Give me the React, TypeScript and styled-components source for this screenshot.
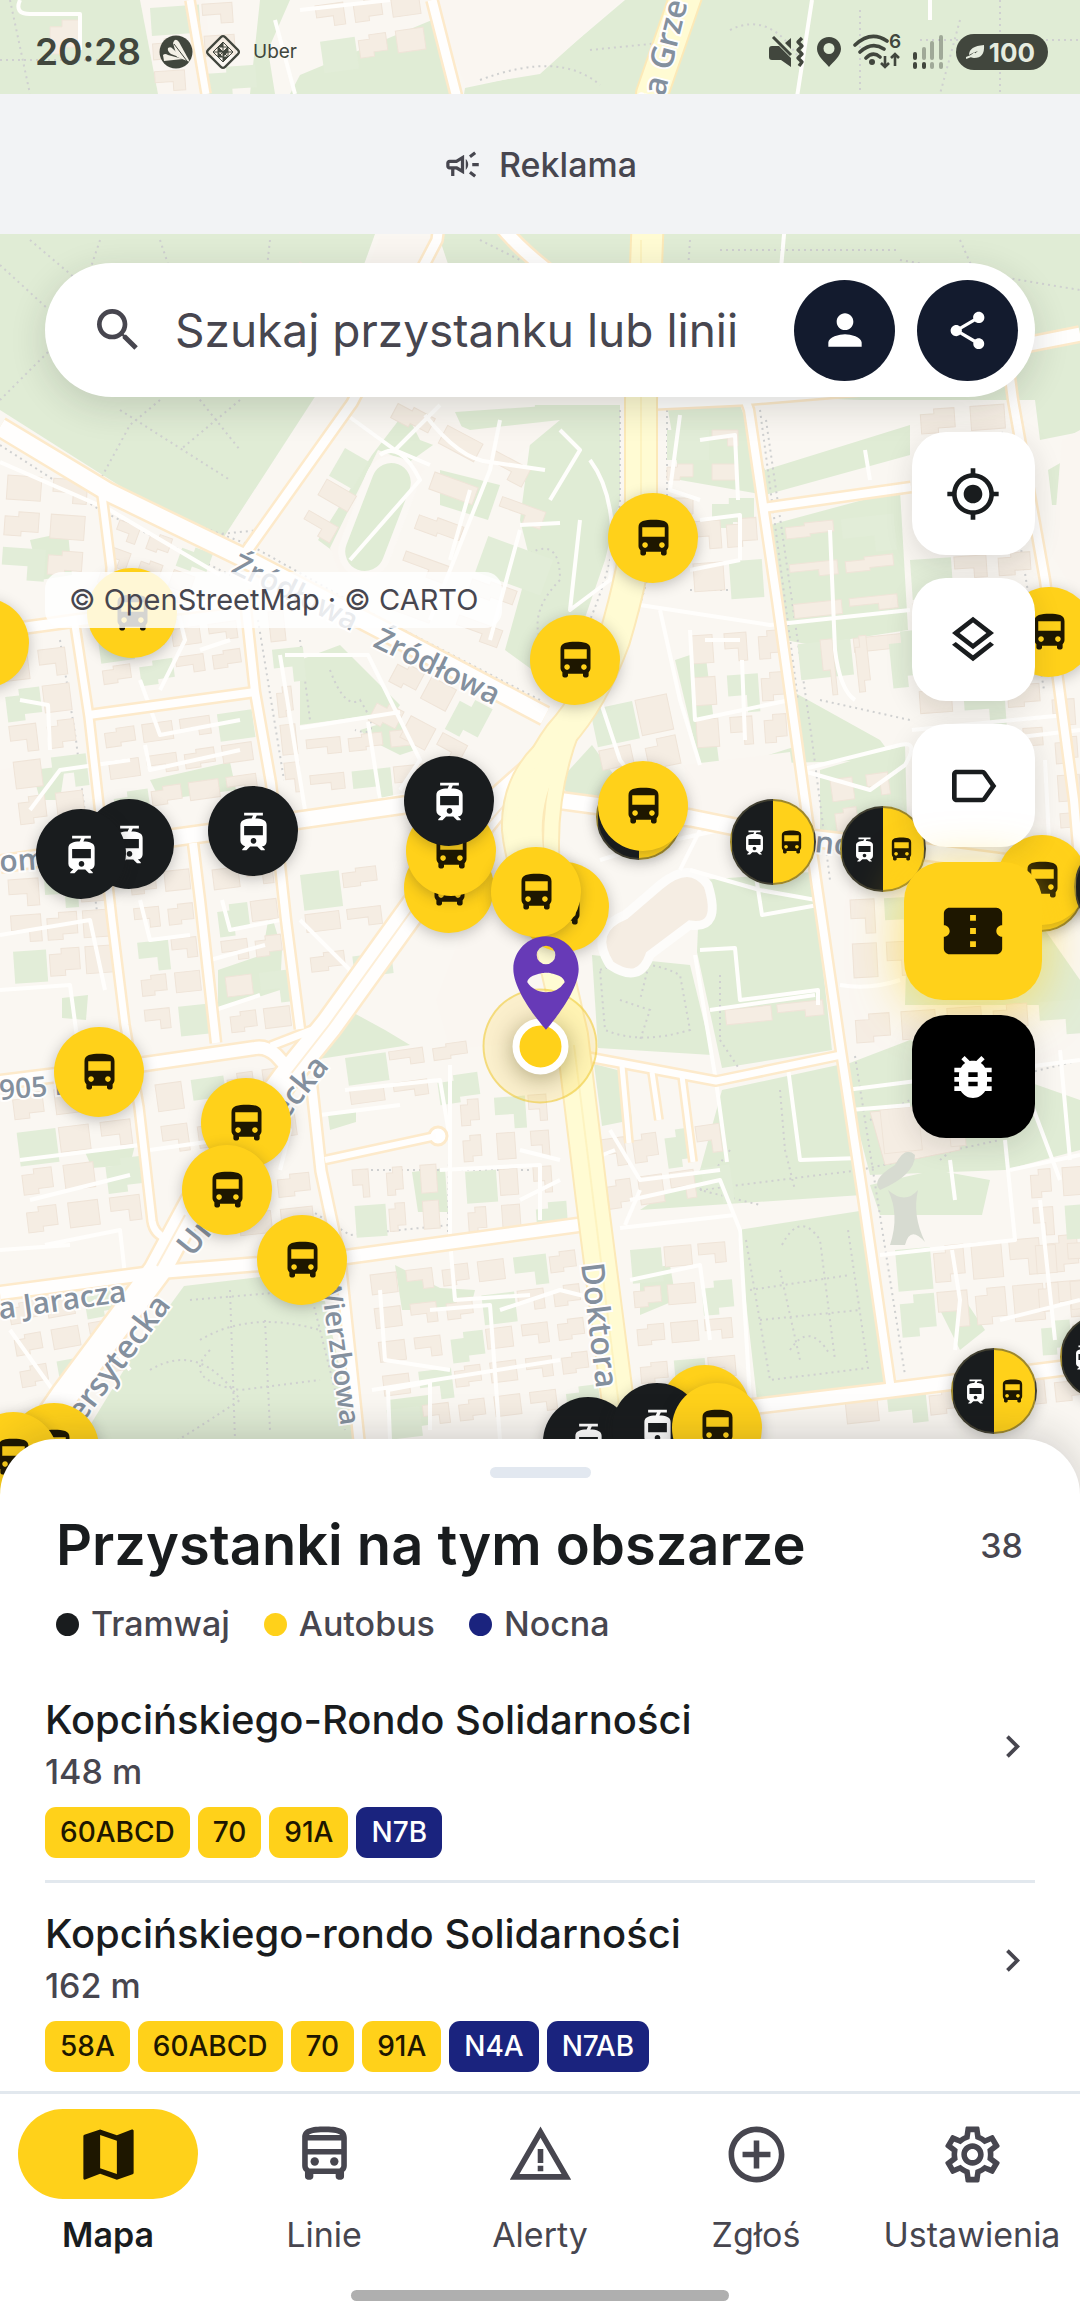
import React from 'react';
import styled, { createGlobalStyle } from 'styled-components';
import {
  MdAddCircleOutline,
  MdBugReport,
  MdChevronRight,
  MdConfirmationNumber,
  MdDirectionsBus,
  MdLabelOutline,
  MdMap,
  MdMyLocation,
  MdOutlineCampaign,
  MdOutlineDirectionsBus,
  MdOutlineLayers,
  MdOutlineSettings,
  MdPerson,
  MdPersonPinCircle,
  MdSearch,
  MdShare,
  MdTram,
  MdWarningAmber,
} from 'react-icons/md';

const color = {
  ink: '#191c1e',
  muted: '#47464f',
  yellow: '#ffd11a',
  onYellow: '#1e1700',
  night: '#1a237e',
  navy: '#131b2e',
  line: '#e2e8ee',
  status: '#41463d',
};

const GlobalStyle = createGlobalStyle`
  *, *::before, *::after { box-sizing: border-box; }
  body {
    margin: 0;
    font-family: Inter, Roboto, "Noto Sans", sans-serif;
    color: ${color.ink};
    background: #ffffff;
  }
  button, input { font: inherit; color: inherit; }
  button { border: 0; padding: 0; background: none; cursor: pointer; }
  svg { display: block; flex: none; }
`;

/* ---------- Page shell ---------- */

const Screen = styled.div`
  position: relative;
  display: flex;
  flex-direction: column;
  min-height: 100vh;
  overflow: hidden;
`;

const MapLayer = styled.div`
  position: absolute;
  inset: 0;
  overflow: hidden;
  background: #faf7f2;
`;

const MapDrawing = styled.svg`
  width: 100%;
  height: 1520px;
`;

const Overlay = styled.div`
  position: relative;
  display: flex;
  flex-direction: column;
  flex: 1;
  pointer-events: none;
  & > * { pointer-events: auto; }
`;

/* ---------- Status bar ---------- */

const StatusBar = styled.header`
  display: flex;
  align-items: center;
  justify-content: space-between;
  height: 94px;
  padding: 10px 32px 0 35px;
  color: ${color.status};
`;

const StatusGroup = styled.div<{ $gap: number }>`
  display: flex;
  align-items: center;
  gap: ${(p) => p.$gap}px;
`;

const Clock = styled.time`
  margin-right: 6px;
  font-size: 37px;
  font-weight: 600;
  line-height: 44px;
`;

const CarrierApp = styled.span`
  font-size: 19px;
  line-height: 24px;
`;

const Battery = styled.div`
  display: flex;
  align-items: center;
  gap: 4px;
  height: 36px;
  padding: 0 13px 0 10px;
  border-radius: 18px;
  background: ${color.status};
  color: #e6ecdf;
  font-size: 26px;
  font-weight: 700;
`;

/* ---------- Advert ---------- */

const AdBanner = styled.aside`
  display: flex;
  align-items: center;
  justify-content: center;
  gap: 17px;
  height: 140px;
  background: #f2f3f5;
  color: ${color.muted};
  font-size: 34px;
  font-weight: 500;
`;

/* ---------- Search ---------- */

const SearchBar = styled.form`
  display: flex;
  align-items: center;
  gap: 22px;
  height: 134px;
  margin: 29px 45px 0;
  padding: 0 17px 0 45px;
  border-radius: 67px;
  background: #ffffff;
  box-shadow: 0 10px 36px rgba(30, 40, 30, 0.16);
`;

const SearchField = styled.label`
  display: flex;
  flex: 1;
  align-items: center;
  gap: 29px;
  min-width: 0;
  color: ${color.muted};
`;

const SearchInput = styled.input`
  flex: 1;
  min-width: 0;
  padding: 0;
  border: 0;
  outline: 0;
  background: none;
  font-size: 46px;
  line-height: 56px;
  &::placeholder { color: ${color.muted}; opacity: 1; }
`;

const RoundButton = styled.button`
  display: grid;
  place-items: center;
  width: 101px;
  height: 101px;
  flex: none;
  border-radius: 50%;
  background: ${color.navy};
  color: #ffffff;
`;

/* ---------- Map controls ---------- */

const ControlsRow = styled.div`
  display: flex;
  align-items: flex-start;
  justify-content: space-between;
  padding: 35px 38px 0 45px;
`;

const Attribution = styled.p`
  margin: 140px 0 0;
  padding: 0 24px;
  border-radius: 17px;
  background: rgba(255, 255, 255, 0.82);
  color: ${color.muted};
  font-size: 29px;
  line-height: 56px;
`;

const ControlStack = styled.div`
  display: flex;
  flex-direction: column;
  align-items: center;
  gap: 23px;
`;

const ActionStack = styled(ControlStack)`
  gap: 15px;
`;

const MapButton = styled.button<{ $tone?: 'light' | 'dark' | 'accent' }>`
  display: grid;
  place-items: center;
  width: ${(p) => (p.$tone === 'accent' ? 138 : 123)}px;
  height: ${(p) => (p.$tone === 'accent' ? 138 : 123)}px;
  border-radius: ${(p) => (p.$tone === 'accent' ? 39 : 34)}px;
  background: ${(p) => (p.$tone === 'accent' ? color.yellow : p.$tone === 'dark' ? '#000000' : '#ffffff')};
  color: ${(p) => (p.$tone === 'accent' ? color.onYellow : p.$tone === 'dark' ? '#ffffff' : color.ink)};
  box-shadow: ${(p) =>
    p.$tone === 'accent' ? '0 8px 50px rgba(255, 209, 26, 0.6)' : '0 8px 28px rgba(30, 30, 30, 0.13)'};
`;

/* ---------- Markers on the map ---------- */

type MarkerKind = 'bus' | 'tram' | 'both';

const MarkerButton = styled.button<{ $x: number; $y: number; $kind: MarkerKind }>`
  position: absolute;
  left: calc(50% + ${(p) => p.$x - 540}px);
  top: ${(p) => p.$y}px;
  display: flex;
  align-items: center;
  justify-content: ${(p) => (p.$kind === 'both' ? 'space-around' : 'center')};
  width: ${(p) => (p.$kind === 'both' ? 86 : 90)}px;
  height: ${(p) => (p.$kind === 'both' ? 86 : 90)}px;
  padding: ${(p) => (p.$kind === 'both' ? '0 4px' : '0')};
  transform: translate(-50%, -50%);
  border: ${(p) => (p.$kind === 'both' ? '2px solid rgba(90, 85, 60, 0.6)' : '0')};
  border-radius: 50%;
  background: ${(p) =>
    p.$kind === 'both'
      ? `linear-gradient(90deg, ${color.ink} 50%, ${color.yellow} 50%)`
      : p.$kind === 'bus'
        ? color.yellow
        : color.ink};
  color: ${(p) => (p.$kind === 'bus' ? color.onYellow : '#ffffff')};
  box-shadow: 0 3px 14px rgba(30, 30, 30, 0.26);
  & > svg + svg { color: ${color.onYellow}; }
`;

const UserHalo = styled.div`
  position: absolute;
  left: 50%;
  top: 1046px;
  display: grid;
  place-items: center;
  width: 115px;
  height: 115px;
  transform: translate(-50%, -50%);
  border: 2px solid rgba(240, 205, 70, 0.6);
  border-radius: 50%;
  background: rgba(255, 209, 26, 0.17);
`;

const UserDot = styled.div`
  width: 56px;
  height: 56px;
  border: 7px solid #ffffff;
  border-radius: 50%;
  background: ${color.yellow};
  box-shadow: 0 4px 24px rgba(60, 50, 0, 0.4);
`;

const UserPin = styled.div`
  position: absolute;
  left: calc(50% + 6px);
  top: 927px;
  transform: translateX(-50%);
  color: #673ab7;
`;

/* ---------- Bottom sheet ---------- */

const Sheet = styled.section`
  position: relative;
  display: flex;
  flex-direction: column;
  padding-top: 28px;
  border-radius: 56px 56px 0 0;
  background: #ffffff;
  box-shadow: 0 -6px 40px rgba(30, 30, 30, 0.18);
`;

const Handle = styled.div`
  align-self: center;
  width: 101px;
  height: 11px;
  border-radius: 6px;
  background: #e2e8f0;
`;

const SheetHeader = styled.div`
  display: flex;
  align-items: center;
  justify-content: space-between;
  margin-top: 35px;
  padding: 0 57px 0 56px;
`;

const SheetTitle = styled.h1`
  margin: 0;
  font-size: 56px;
  font-weight: 600;
  line-height: 64px;
`;

const StopCount = styled.span`
  color: ${color.muted};
  font-size: 34px;
  font-weight: 500;
`;

const Legend = styled.ul`
  display: flex;
  gap: 34px;
  margin: 27px 0 0;
  padding: 0 56px;
  list-style: none;
`;

const LegendItem = styled.li<{ $dot: string }>`
  display: flex;
  align-items: center;
  gap: 12px;
  color: ${color.muted};
  font-size: 34px;
  font-weight: 500;
  line-height: 40px;
  &::before {
    content: '';
    width: 23px;
    height: 23px;
    border-radius: 50%;
    background: ${(p) => p.$dot};
  }
`;

const StopList = styled.ul`
  margin: 25px 0 0;
  padding: 0 45px;
  list-style: none;
`;

const StopItem = styled.li`
  padding: 25px 0 22px;
  border-bottom: 3px solid ${color.line};
  &:last-child {
    padding-bottom: 19px;
    border-bottom: 0;
  }
`;

const StopButton = styled.button`
  display: flex;
  align-items: center;
  justify-content: space-between;
  width: 100%;
  text-align: left;
`;

const StopName = styled.span`
  display: block;
  font-size: 40px;
  font-weight: 500;
  line-height: 52px;
`;

const StopDistance = styled.span`
  display: block;
  color: ${color.muted};
  font-size: 34px;
  font-weight: 500;
  line-height: 52px;
`;

const LineChips = styled.div`
  display: flex;
  gap: 8px;
  margin-top: 9px;
`;

const LineChip = styled.span<{ $night: boolean }>`
  padding: 0 15px;
  border-radius: 11px;
  background: ${(p) => (p.$night ? color.night : color.yellow)};
  color: ${(p) => (p.$night ? '#ffffff' : color.onYellow)};
  font-size: 28px;
  font-weight: 500;
  line-height: 51px;
`;

/* ---------- Navigation ---------- */

const NavBar = styled.nav`
  position: relative;
  display: grid;
  grid-template-columns: repeat(5, 1fr);
  padding-top: 15px;
  border-top: 3px solid ${color.line};
  background: #ffffff;
`;

const NavLink = styled.a<{ $active: boolean }>`
  display: flex;
  flex-direction: column;
  align-items: center;
  gap: 14px;
  color: ${(p) => (p.$active ? color.ink : color.muted)};
  font-size: 34px;
  font-weight: ${(p) => (p.$active ? 600 : 400)};
  line-height: 44px;
  text-decoration: none;
`;

const NavPill = styled.span<{ $active: boolean }>`
  display: grid;
  place-items: center;
  width: 180px;
  height: 90px;
  border-radius: 45px;
  background: ${(p) => (p.$active ? color.yellow : 'transparent')};
  color: ${(p) => (p.$active ? color.onYellow : color.muted)};
`;

const GestureArea = styled.footer`
  position: relative;
  display: flex;
  justify-content: center;
  padding: 33px 0 15px;
  background: #ffffff;
`;

const GestureBar = styled.div`
  width: 35%;
  height: 11px;
  border-radius: 6px;
  background: #afafaf;
`;

/* ---------- Map data ---------- */

const parks = [
  'M0 0H150L165 94L170 240H0Z',
  'M260 0H290L268 50L275 94H250Z',
  'M300 75L432 20L455 94H290Z',
  'M465 88L540 72L625 0H1080V400H860L650 392L460 300L440 240Z',
  'M0 234H375L318 392L222 540L150 505L0 410Z',
  'M425 415L440 440L398 470L345 560L318 540L372 455L405 412Z',
  'M440 470L500 485L488 520L440 505Z',
  'M455 412L560 405L530 440L470 445Z',
  'M535 405H620V500L605 560L560 690L505 650L530 560L520 520Z',
  'M300 660L340 645L400 705L395 712L300 725Z',
  'M360 730L400 718L415 750L400 755L370 740Z',
  'M30 540L68 532L72 575L40 580Z',
  'M150 780L230 762L236 790L160 800Z',
  'M32 770L65 766L60 800L40 800Z',
  'M668 410L740 405L765 470L910 425V455L765 495L680 480Z',
  'M770 525L900 490L908 630L812 645L785 640Z',
  'M675 660L705 650L720 770L800 745L790 690L880 740L895 760L700 765Z',
  'M820 770L905 745L908 860L820 835Z',
  'M560 780L592 745L625 790L615 805L570 800Z',
  'M1035 400H1080V432L1040 440Z',
  'M1048 470L1062 462L1075 490L1064 505H1052Z',
  'M592 955L690 965L712 1055L598 1048Z',
  'M700 880L812 872L832 1050L722 1068L697 952Z',
  'M594 1064L625 1072L632 1120L602 1126Z',
  'M722 1090L838 1065L862 1195L640 1210L700 1170Z',
  'M738 1230L866 1210L888 1384L757 1400Z',
  'M842 1066L910 1040L1080 1100V1150L1005 1170L870 1175Z',
  'M870 1185L935 1170L990 1180L982 1215L880 1215Z',
  'M905 1005H1080V980L1045 930L908 900Z',
  'M640 1270L670 1265L676 1300L640 1315Z',
  'M184 1286L318 1270L358 1450H75L130 1360Z',
  'M218 970L262 955L270 910L282 950L280 990L218 1010Z',
  'M330 1000L385 1030L410 1045L345 1055L300 1062Z',
  'M62 998L88 995L86 1020L62 1018Z',
  'M85 1152L135 1145L130 1165L92 1168Z',
  'M395 1265L402 1310L470 1310L475 1290L440 1288Z',
  'M412 1172L445 1168L448 1212L418 1212Z',
  'M388 1400L428 1395V1425L392 1430Z',
  'M328 1115L356 1110V1122L330 1130Z',
  'M940 1310L965 1300L985 1330L960 1350Z',
];

const pale = [
  'M430 0H622L540 74L466 86Z',
  'M140 0H205L215 94H158Z',
  'M380 236H440L400 330L310 410L255 490L222 540L320 395Z',
  'M400 400L470 430L560 420L500 470L420 440Z',
  'M330 548L378 450L425 468L345 585Z',
  'M1052 555L1062 440L1080 430V600Z',
  'M684 765L790 752L800 820L690 810Z',
  'M0 770L25 765L35 850H0Z',
  'M436 1000L472 905L540 895V1040L450 1050Z',
];

const roads: { d: string; w: number }[] = [
  { d: 'M190 0L206 94', w: 7 },
  { d: 'M432 0L456 94L437 240L352 403L246 552', w: 9 },
  { d: 'M500 225Q530 262 590 300', w: 12 },
  { d: 'M0 427L108 492L240 556L386 632L545 716', w: 17 },
  { d: 'M102 495L111 567L110 600', w: 7 },
  { d: 'M75 625L89 717L112 920L125 1025L139 1107L152 1221Q154 1234 166 1238', w: 7 },
  { d: 'M0 631L80 620L246 600', w: 10 },
  { d: 'M89 715L255 692', w: 8 },
  { d: 'M244 590L255 692L271 783L286 920L300 1029', w: 8 },
  { d: 'M193 843L200 900L216 1043', w: 8 },
  { d: 'M0 864L178 837L300 820L404 805L520 794L556 800L691 818L760 832L910 850L1080 872', w: 15 },
  { d: 'M0 1082L145 1064L255 1048Q266 1046 276 1055L295 1076', w: 12 },
  { d: 'M271 1046L325 1025', w: 7 },
  { d: 'M311 1079L321 1171L340 1260L360 1450', w: 9 },
  { d: 'M0 1293L160 1272L346 1257L600 1222', w: 12 },
  { d: 'M325 1160L436 1136', w: 6 },
  { d: 'M735 370L749 410L777 600L798 750L816 880L841 1051L863 1197L891 1390', w: 8 },
  { d: 'M763 508L911 487', w: 8 },
  { d: 'M655 402L740 398L860 388L1030 344L1080 334', w: 13 },
  { d: 'M1005 340L1013 400L1045 580L1059 687L1074 800L1080 870', w: 8 },
  { d: 'M588 1057L716 1081L841 1055', w: 7 },
  { d: 'M622 1066L629 1143', w: 5 },
  { d: 'M652 1072L659 1120', w: 5 },
  { d: 'M682 1076L693 1162', w: 5 },
  { d: 'M630 1430L749 1407L891 1390L1080 1366', w: 13 },
  { d: 'M545 760L500 800L414 907L329 1025L286 1078L193 1204L157 1271L64 1396L20 1460', w: 26 },
];

const lanes = [
  'M540 765L414 907L329 1025L290 1075',
  'M185 1215L157 1266',
];

const avenues: { d: string; w: number }[] = [
  { d: 'M688 -10L652 94L647 240L641 400V500Q638 560 614 640Q592 700 560 735Q520 790 528 850L548 930L572 1035L592 1200L624 1450', w: 30 },
  { d: 'M560 735Q508 770 510 830Q515 880 542 910', w: 14 },
  { d: 'M585 700Q545 780 552 870', w: 14 },
];

const alleys = [
  'M20 0Q14 14 30 14H80V50',
  'M275 20L295 94M300 10L390 0',
  'M930 0V20M812 0L795 110L780 280L778 263',
  'M0 462L110 510L220 575',
  'M340 410L395 450L430 465M395 450L440 405',
  'M425 415Q460 460 490 462L545 470',
  'M430 620L490 470L500 420',
  'M380 455Q400 440 420 480L350 560',
  'M450 560L470 490M520 525L560 523M490 640L520 530',
  'M285 655L368 655L420 760L400 790M300 728L400 712',
  'M280 655L305 810M368 722L380 800L430 790',
  'M140 680L160 735L240 720M145 745L150 770L240 750',
  'M30 810L60 770L130 760M20 700L48 705L50 750',
  'M175 600L185 640L160 690M200 650L230 640',
  'M560 430L580 450L550 500M590 460Q620 500 610 580L570 610L580 520',
  'M680 415L670 490L700 500M700 440L735 435L738 500',
  'M640 605L770 625L910 610M830 530L835 650Q840 690 855 700',
  'M865 450L870 480M700 520L740 515V560M690 570L740 560',
  'M690 630L695 720L790 700M742 660L745 740M705 640H740',
  'M700 765L680 700L660 610M600 700L620 760L650 800',
  'M800 770L900 745Q920 740 905 765L870 790L800 770',
  'M910 750L1080 730M1045 760L1050 860M912 730L1065 715',
  'M600 860L650 845L720 830M680 870L700 830',
  'M690 870L760 890L816 900M755 870L762 915L818 905',
  'M695 955L716 1081L727 1162M700 950L735 948L740 1000L818 990V1005',
  'M710 1010L815 995M840 985Q870 990 900 980',
  'M788 1068L800 1160L860 1158M785 1070L760 1070',
  'M846 1090L1080 1060M850 1110L910 1105M1005 1140L1015 1240L880 1255',
  'M1010 1170L1080 1155M1060 1050L1070 1160M1030 1100L1060 1180M950 1160L955 1200',
  'M952 1250L960 1300L955 1350M1040 1200L1055 1340M1000 1320L1080 1300',
  'M610 1130L640 1180L720 1170M590 1160L615 1150M630 1200L720 1180L740 1230L750 1400',
  'M620 1228L735 1215M630 1280L700 1265L710 1340M640 1190L625 1225',
  'M520 1150L560 1160M520 1200L560 1180M500 1310L560 1290L600 1300',
  'M0 935L90 920L105 990M140 900L150 940L190 935M0 990L70 985L80 1060',
  'M210 960L265 945M215 1010L260 995M222 900L230 930L280 920',
  'M150 1150L290 1130L280 1170M20 1160L140 1145M30 1200L130 1175',
  'M45 1245L120 1230L125 1275M0 1250L70 1245M10 1330L60 1400M100 1330L130 1370',
  'M362 1250L450 1240L455 1300L530 1295M380 1290L385 1360L450 1370M440 1170L540 1165L540 1220',
  'M372 1390L560 1360M430 1310L490 1305L500 1440M390 1440L388 1390L430 1382V1430',
  'M345 1090L440 1080L450 1140M320 1115L400 1105M450 1065V1240M300 920L350 970L340 1010',
];

const dotted = [
  'M0 265L60 320L100 390M30 240L160 350L240 450M100 240L70 330L0 400M160 400L130 425L100 480M240 400L180 450M20 430L130 500L250 545',
  'M120 410L230 480M160 240L180 300L300 340M270 240L260 330M210 535L260 530',
  'M480 80Q560 50 600 85M590 50L690 40M730 30Q770 10 800 60M860 10V90M920 40H1080M1000 0V94M960 20L940 94M10 0L30 94M0 60H100',
  'M480 240L520 260M690 240L680 390M720 250H900M960 240L1000 330M900 260L1080 290',
  'M620 410V500Q615 560 590 620M667 410V510L630 640M760 410L798 700M520 560Q560 530 560 580Q530 610 540 640',
  'M330 670Q345 710 360 700Q385 740 355 730M300 640L310 720M690 590H760M820 700L910 720',
  'M600 970Q640 955 680 975L690 1030Q640 1045 605 1030ZM620 1000L650 1010L640 1040M720 975L720 1040M650 960L640 1000',
  'M720 1040L740 1070M780 1090L785 1150L795 1190M700 1190L860 1170M730 1150L700 1190L760 1205',
  'M746 1240L770 1380L868 1368L848 1230M780 1270L800 1360M750 1290L850 1275M782 1245Q800 1210 820 1240L835 1360M760 1320L860 1310M790 1350Q810 1320 830 1355',
  'M190 1300L310 1290L345 1430M230 1290L235 1440M200 1340Q250 1310 320 1330M150 1370Q200 1340 240 1400Q180 1440 160 1450M265 1320L270 1430M210 1350Q180 1380 240 1390L320 1380',
  'M860 1170L1000 1140M1000 1080L1080 1060M870 1120L930 1090M940 1160L1000 1110',
  'M310 1210L350 1235L450 1225M450 1080L448 1235M285 900L300 1010M365 1170H540',
  'M0 445L100 510L230 575M540 700L380 618L250 545M60 640L76 740L98 920M258 620L284 780M766 420L812 740L830 880M1000 420L1044 690M855 1056L905 1375M576 1060L590 1180',
];

type Cluster = { x: number; y: number; cols: number; rows: number; dx: number; dy: number; w: number; h: number; r: number };

const clusters: Cluster[] = [
  { x: 150, y: 8, cols: 2, rows: 3, dx: 52, dy: 32, w: 30, h: 20, r: -4 },
  { x: 315, y: 6, cols: 3, rows: 2, dx: 38, dy: 36, w: 28, h: 22, r: -8 },
  { x: 50, y: 20, cols: 1, rows: 1, dx: 40, dy: 30, w: 30, h: 34, r: 0 },
  { x: 8, y: 475, cols: 2, rows: 3, dx: 46, dy: 36, w: 34, h: 24, r: 4 },
  { x: 120, y: 520, cols: 3, rows: 3, dx: 34, dy: 28, w: 22, h: 18, r: 20 },
  { x: 345, y: 448, cols: 1, rows: 3, dx: 30, dy: 36, w: 34, h: 18, r: 30 },
  { x: 435, y: 472, cols: 2, rows: 4, dx: 72, dy: 42, w: 46, h: 18, r: 20 },
  { x: 300, y: 262, cols: 2, rows: 3, dx: 52, dy: 36, w: 28, h: 18, r: 30 },
  { x: 400, y: 400, cols: 3, rows: 1, dx: 54, dy: 30, w: 40, h: 20, r: 28 },
  { x: 0, y: 655, cols: 2, rows: 5, dx: 38, dy: 36, w: 27, h: 27, r: -7 },
  { x: 98, y: 640, cols: 4, rows: 2, dx: 37, dy: 28, w: 28, h: 17, r: -8 },
  { x: 104, y: 730, cols: 4, rows: 3, dx: 38, dy: 32, w: 30, h: 18, r: -8 },
  { x: 268, y: 612, cols: 1, rows: 5, dx: 34, dy: 38, w: 15, h: 30, r: -6 },
  { x: 306, y: 740, cols: 3, rows: 2, dx: 42, dy: 36, w: 34, h: 16, r: -6 },
  { x: 400, y: 660, cols: 3, rows: 2, dx: 36, dy: 44, w: 28, h: 24, r: 28 },
  { x: 667, y: 430, cols: 2, rows: 3, dx: 45, dy: 34, w: 26, h: 16, r: 0 },
  { x: 690, y: 522, cols: 2, rows: 2, dx: 36, dy: 42, w: 30, h: 28, r: -4 },
  { x: 785, y: 525, cols: 2, rows: 4, dx: 56, dy: 40, w: 48, h: 14, r: -6 },
  { x: 690, y: 636, cols: 3, rows: 3, dx: 34, dy: 42, w: 22, h: 28, r: -4 },
  { x: 820, y: 640, cols: 3, rows: 1, dx: 34, dy: 60, w: 12, h: 56, r: -6 },
  { x: 590, y: 710, cols: 2, rows: 2, dx: 46, dy: 42, w: 32, h: 36, r: -12 },
  { x: 830, y: 780, cols: 2, rows: 2, dx: 36, dy: 30, w: 22, h: 22, r: -8 },
  { x: 8, y: 880, cols: 3, rows: 3, dx: 36, dy: 36, w: 30, h: 27, r: -4 },
  { x: 130, y: 875, cols: 2, rows: 5, dx: 34, dy: 34, w: 25, h: 20, r: -6 },
  { x: 212, y: 870, cols: 2, rows: 5, dx: 34, dy: 36, w: 26, h: 20, r: -7 },
  { x: 300, y: 875, cols: 2, rows: 3, dx: 42, dy: 40, w: 34, h: 18, r: -7 },
  { x: 12, y: 1095, cols: 3, rows: 4, dx: 42, dy: 38, w: 30, h: 25, r: -7 },
  { x: 155, y: 1085, cols: 4, rows: 2, dx: 36, dy: 42, w: 26, h: 27, r: -8 },
  { x: 235, y: 1180, cols: 2, rows: 2, dx: 42, dy: 34, w: 32, h: 22, r: -6 },
  { x: 8, y: 1305, cols: 3, rows: 3, dx: 38, dy: 32, w: 27, h: 20, r: -10 },
  { x: 345, y: 1058, cols: 3, rows: 2, dx: 44, dy: 32, w: 34, h: 15, r: -8 },
  { x: 352, y: 1170, cols: 3, rows: 2, dx: 34, dy: 36, w: 16, h: 28, r: -4 },
  { x: 460, y: 1100, cols: 3, rows: 4, dx: 34, dy: 36, w: 18, h: 26, r: -4 },
  { x: 370, y: 1275, cols: 6, rows: 5, dx: 36, dy: 34, w: 26, h: 20, r: -7 },
  { x: 600, y: 1140, cols: 4, rows: 2, dx: 32, dy: 42, w: 24, h: 28, r: -8 },
  { x: 630, y: 1250, cols: 3, rows: 4, dx: 34, dy: 38, w: 27, h: 20, r: -5 },
  { x: 725, y: 1010, cols: 2, rows: 1, dx: 52, dy: 30, w: 46, h: 15, r: -6 },
  { x: 850, y: 900, cols: 2, rows: 2, dx: 34, dy: 44, w: 24, h: 34, r: -3 },
  { x: 855, y: 1015, cols: 5, rows: 1, dx: 46, dy: 38, w: 34, h: 28, r: -4 },
  { x: 880, y: 1110, cols: 2, rows: 1, dx: 44, dy: 38, w: 38, h: 44, r: -6 },
  { x: 895, y: 1250, cols: 5, rows: 2, dx: 38, dy: 46, w: 30, h: 36, r: -5 },
  { x: 1030, y: 1170, cols: 2, rows: 5, dx: 32, dy: 38, w: 20, h: 28, r: -4 },
  { x: 845, y: 1400, cols: 6, rows: 1, dx: 42, dy: 34, w: 32, h: 24, r: -6 },
  { x: 1052, y: 700, cols: 1, rows: 4, dx: 34, dy: 38, w: 22, h: 26, r: -4 },
  { x: 920, y: 410, cols: 2, rows: 1, dx: 50, dy: 30, w: 34, h: 24, r: -4 },
  { x: 910, y: 560, cols: 3, rows: 5, dx: 44, dy: 44, w: 32, h: 22, r: -4 },
];

const labels: { text: string; x: number; y: number; r: number; size?: number }[] = [
  { text: 'ia Grze', x: 662, y: 106, r: -76, size: 32 },
  { text: 'Źródłowa', x: 230, y: 572, r: 26 },
  { text: 'Źródłowa', x: 372, y: 646, r: 26 },
  { text: 'om', x: 0, y: 872, r: -4 },
  { text: 'no', x: 814, y: 852, r: 6 },
  { text: '905 r.', x: 0, y: 1100, r: -5, size: 28 },
  { text: 'ecka', x: 285, y: 1122, r: -51, size: 32 },
  { text: 'Uni', x: 192, y: 1258, r: -51, size: 32 },
  { text: 'ersytecka', x: 82, y: 1424, r: -53, size: 32 },
  { text: 'na Jaracza', x: -19, y: 1322, r: -8 },
  { text: 'Wierzbowa', x: 320, y: 1278, r: 82, size: 28 },
  { text: 'Doktora', x: 581, y: 1264, r: 83, size: 32 },
];

const markers: { kind: MarkerKind; x: number; y: number }[] = [
  { kind: 'bus', x: -16, y: 643 },
  { kind: 'bus', x: 132, y: 613 },
  { kind: 'bus', x: 653, y: 538 },
  { kind: 'bus', x: 575, y: 660 },
  { kind: 'bus', x: 1049, y: 632 },
  { kind: 'tram', x: 129, y: 844 },
  { kind: 'tram', x: 81, y: 854 },
  { kind: 'tram', x: 253, y: 831 },
  { kind: 'bus', x: 449, y: 888 },
  { kind: 'bus', x: 451, y: 851 },
  { kind: 'tram', x: 449, y: 801 },
  { kind: 'bus', x: 564, y: 907 },
  { kind: 'bus', x: 536, y: 892 },
  { kind: 'both', x: 639, y: 817 },
  { kind: 'bus', x: 643, y: 806 },
  { kind: 'both', x: 773, y: 842 },
  { kind: 'both', x: 883, y: 849 },
  { kind: 'both', x: 1041, y: 889 },
  { kind: 'bus', x: 1042, y: 880 },
  { kind: 'both', x: 1117, y: 887 },
  { kind: 'bus', x: 99, y: 1072 },
  { kind: 'bus', x: 246, y: 1123 },
  { kind: 'bus', x: 227, y: 1190 },
  { kind: 'bus', x: 302, y: 1260 },
  { kind: 'bus', x: 54, y: 1448 },
  { kind: 'bus', x: 13, y: 1457 },
  { kind: 'tram', x: 588, y: 1442 },
  { kind: 'bus', x: 705, y: 1410 },
  { kind: 'tram', x: 657, y: 1428 },
  { kind: 'bus', x: 717, y: 1428 },
  { kind: 'both', x: 994, y: 1391 },
  { kind: 'both', x: 1103, y: 1357 },
];

const stops = [
  { name: 'Kopcińskiego-Rondo Solidarności', distance: '148 m', lines: ['60ABCD', '70', '91A', 'N7B'] },
  { name: 'Kopcińskiego-rondo Solidarności', distance: '162 m', lines: ['58A', '60ABCD', '70', '91A', 'N4A', 'N7AB'] },
];

const tabs = [
  { label: 'Mapa', Icon: MdMap, active: true },
  { label: 'Linie', Icon: MdOutlineDirectionsBus, active: false },
  { label: 'Alerty', Icon: MdWarningAmber, active: false },
  { label: 'Zgłoś', Icon: MdAddCircleOutline, active: false },
  { label: 'Ustawienia', Icon: MdOutlineSettings, active: false },
];

/* ---------- Drawings ---------- */

// An L-shaped or plain footprint, alternating so that blocks look irregular.
function footprint(w: number, h: number, n: number) {
  if (n % 3 === 0) return `M0 0H${w}V${h}H0Z`;
  if (n % 3 === 1) return `M0 0H${w}V${h}H${w * 0.6}V${h * 0.55}H0Z`;
  return `M0 ${h * 0.2}H${w * 0.4}V0H${w}V${h * 0.8}H${w * 0.5}V${h}H0Z`;
}

function CityMap() {
  return (
    <MapDrawing viewBox="0 0 1080 1520" preserveAspectRatio="xMidYMin slice" aria-hidden="true">
      <g fill="#e0ecd5">
        {parks.map((d) => <path key={d} d={d} />)}
      </g>
      <g fill="#faf6f1">
        {pale.map((d) => <path key={d} d={d} />)}
      </g>
      <rect x="355" y="457" width="46" height="120" rx="23" transform="rotate(21 378 517)" fill="#e0ecd5" stroke="#fbf8f4" strokeWidth="7" />
      <g fill="none" stroke="#cfd0d0" strokeWidth="2" strokeDasharray="2 4">
        {dotted.map((d) => <path key={d} d={d} />)}
      </g>
      <path d="M610 965Q588 930 625 915L660 885Q690 860 708 885Q722 930 690 925L650 955Q640 985 610 965Z" fill="#f5ede3" stroke="#fdfcfa" strokeWidth="9" />
      <path d="M870 1112L960 1105V1150L885 1165Z" fill="#f5ede3" stroke="#eee2d5" />
      <path d="M895 1165Q870 1180 880 1190Q915 1175 915 1155Q905 1145 895 1165ZM888 1190Q900 1215 890 1245H905Q910 1225 925 1242Q912 1215 918 1190Q905 1205 888 1190Z" fill="#d7dbd1" />
      {clusters.map((c, i) => (
        <g key={i} transform={`translate(${c.x} ${c.y}) rotate(${c.r})`} strokeWidth="1">
          {Array.from({ length: c.cols * c.rows }, (_, n) => {
            const lawn = (n * 3 + i) % 5 === 0;
            return (
              <path
                key={n}
                transform={`translate(${(n % c.cols) * c.dx} ${Math.floor(n / c.cols) * c.dy})`}
                d={lawn ? footprint(c.dx - 3, c.dy - 4, n) : footprint(c.w, c.h, n + i)}
                fill={lawn ? '#e2edd8' : '#f5ede3'}
                stroke={lawn ? 'none' : '#efe4d8'}
              />
            );
          })}
        </g>
      ))}
      <g fill="none" stroke="#fffefc" strokeWidth="4" strokeLinejoin="round">
        {alleys.map((d) => <path key={d} d={d} />)}
      </g>
      <g fill="none" strokeLinejoin="round">
        {roads.map((r) => <path key={r.d} d={r.d} stroke="#fdeacb" strokeWidth={r.w + 5} />)}
        <circle cx="438" cy="1136" r="9" fill="#ffffff" stroke="#fdeacb" strokeWidth="3" />
        {roads.map((r) => <path key={r.d} d={r.d} stroke="#fffefd" strokeWidth={r.w} />)}
        {lanes.map((d) => <path key={d} d={d} stroke="#fdeed6" strokeWidth="2" />)}
        {avenues.map((r) => <path key={r.d} d={r.d} stroke="#fce9b8" strokeWidth={r.w + 4} />)}
        {avenues.map((r) => <path key={r.d} d={r.d} stroke="#fffbd3" strokeWidth={r.w} />)}
        <path d="M641 240V500M574 1045L622 1430" stroke="#fdf3c0" strokeWidth="2" />
      </g>
      <g fill="#84909e" stroke="#fffefd" strokeWidth="4" paintOrder="stroke" fontFamily="'Open Sans', 'Noto Sans', sans-serif" fontWeight="600">
        {labels.map((l, i) => (
          <text key={i} fontSize={l.size ?? 30} transform={`translate(${l.x} ${l.y}) rotate(${l.r})`}>
            {l.text}
          </text>
        ))}
      </g>
    </MapDrawing>
  );
}

function Marker({ kind, x, y }: { kind: MarkerKind; x: number; y: number }) {
  const name = kind === 'bus' ? 'Przystanek autobusowy' : kind === 'tram' ? 'Przystanek tramwajowy' : 'Przystanek wspólny';
  return (
    <MarkerButton type="button" aria-label={name} $kind={kind} $x={x} $y={y}>
      {kind === 'both' ? (
        <>
          <MdTram size={29} />
          <MdDirectionsBus size={29} />
        </>
      ) : kind === 'bus' ? (
        <MdDirectionsBus size={45} />
      ) : (
        <MdTram size={45} />
      )}
    </MarkerButton>
  );
}

const ShuttleIcon = () => (
  <svg width="34" height="34" viewBox="0 0 34 34" aria-hidden="true">
    <circle cx="17" cy="17" r="16.5" fill={color.status} />
    <path d="M14 8Q16 2 20 7L31 27L18 22Z" fill="#f3f0e6" />
    <path d="M9 13Q12 11 14 14L25 24L12 19Q8 16 9 13Z" fill="#f3f0e6" />
    <path d="M4 20Q6 18 9 20L24 24L5 26Z" fill="#f3f0e6" />
    <path d="M15 9L28 26" stroke={color.status} strokeWidth="1" />
  </svg>
);

const DiamondIcon = () => (
  <svg width="36" height="36" viewBox="0 0 36 36" fill="none" stroke={color.status} aria-hidden="true">
    <rect x="6" y="6" width="24" height="24" rx="3" transform="rotate(45 18 18)" strokeWidth="2.2" />
    <path d="M18 8V28M8 18H28M18 8L13 13H23ZM18 28L13 23H23ZM8 18L13 13V23ZM28 18L23 13V23ZM13 13L23 23M23 13L13 23" strokeWidth="1" />
    <path d="M13 13L18 18H13ZM23 13V18H18ZM13 23V18L18 23ZM18 18H23L18 23ZM18 8V13H13ZM18 28V23H23Z" fill={color.status} stroke="none" />
  </svg>
);

const MutedIcon = () => (
  <svg width="36" height="32" viewBox="0 0 36 32" fill={color.status} aria-hidden="true">
    <path d="M3 10H10L22 22V31L12 24H3Q0 24 0 21V13Q0 10 3 10ZM16 7L22 2V13Z" />
    <path d="M4 1L22 19" stroke={color.status} strokeWidth="3" />
    <path d="M33 2L29 6L33 10L29 14L33 18L29 22L33 26L30 30" fill="none" stroke={color.status} strokeWidth="3.4" strokeLinejoin="round" />
  </svg>
);

const PlaceIcon = () => (
  <svg width="24" height="30" viewBox="0 0 24 30" aria-hidden="true">
    <path fillRule="evenodd" fill={color.status} d="M12 0C5 0 0 5 0 12C0 19 8 25 12 30C16 25 24 19 24 12C24 5 19 0 12 0ZM12 6A5.500 5.500 0 1 1 12 17A5.500 5.500 0 1 1 12 6Z" />
  </svg>
);

const WifiIcon = () => (
  <svg width="48" height="36" viewBox="0 0 48 36" fill="none" stroke={color.status} aria-hidden="true">
    <path d="M2 11Q18 -4 34 7M7 18Q19 7 31 15M13 24Q20 17 27 23" strokeWidth="3.6" strokeLinecap="round" />
    <circle cx="19" cy="28" r="3" fill={color.status} stroke="none" />
    <path d="M32 22V33M28 29L32 33L36 29M42 32V20M38 24L42 20L46 24" strokeWidth="2.6" />
    <text x="36" y="14" fontSize="19" fontWeight="600" fill={color.status} stroke="none" fontFamily="Inter, sans-serif">6</text>
  </svg>
);

const SignalIcon = () => (
  <svg width="31" height="34" viewBox="0 0 31 34" fill={color.status} aria-hidden="true">
    <rect x="0" y="17" width="4" height="8" rx="2" />
    <rect x="9" y="12" width="4" height="13" rx="2" opacity=".4" />
    <rect x="17" y="6" width="4" height="19" rx="2" opacity=".4" />
    <rect x="26" y="0" width="4" height="25" rx="2" opacity=".4" />
    <rect x="0" y="27" width="4" height="7" rx="2" />
    <rect x="9" y="27" width="4" height="7" rx="2" />
    <rect x="17" y="27" width="4" height="7" rx="2" opacity=".4" />
    <rect x="26" y="27" width="4" height="7" rx="2" opacity=".4" />
  </svg>
);

const LeafIcon = () => (
  <svg width="19" height="16" viewBox="0 0 19 16" aria-hidden="true">
    <path d="M18 1Q19 14 8 14Q5 14 4 12Q8 11 12 7Q6 9 3 11Q3 2 18 1Z" fill="#e6ecdf" />
    <path d="M0 14Q5 13 9 9" stroke="#e6ecdf" strokeWidth="1.800" fill="none" />
  </svg>
);

/* ---------- App ---------- */

export default function App() {
  return (
    <>
      <GlobalStyle />
      <Screen>
        <MapLayer>
          <CityMap />
          {markers.map((m, i) => <Marker key={i} {...m} />)}
          <UserHalo><UserDot /></UserHalo>
          <UserPin><MdPersonPinCircle size={112} /></UserPin>
        </MapLayer>

        <Overlay>
          <StatusBar>
            <StatusGroup $gap={12}>
              <Clock>20:28</Clock>
              <ShuttleIcon />
              <DiamondIcon />
              <CarrierApp>Uber</CarrierApp>
            </StatusGroup>
            <StatusGroup $gap={12}>
              <MutedIcon />
              <PlaceIcon />
              <WifiIcon />
              <SignalIcon />
              <Battery><LeafIcon />100</Battery>
            </StatusGroup>
          </StatusBar>

          <AdBanner>
            <MdOutlineCampaign size={39} />
            Reklama
          </AdBanner>

          <SearchBar role="search">
            <SearchField>
              <MdSearch size={56} />
              <SearchInput type="text" aria-label="Szukaj" placeholder="Szukaj przystanku lub linii" />
            </SearchField>
            <RoundButton type="button" aria-label="Profil"><MdPerson size={50} /></RoundButton>
            <RoundButton type="button" aria-label="Udostępnij"><MdShare size={45} /></RoundButton>
          </SearchBar>

          <ControlsRow>
            <Attribution>© OpenStreetMap · © CARTO</Attribution>
            <ActionStack>
              <ControlStack>
                <MapButton type="button" aria-label="Moja lokalizacja"><MdMyLocation size={56} /></MapButton>
                <MapButton type="button" aria-label="Warstwy"><MdOutlineLayers size={56} /></MapButton>
                <MapButton type="button" aria-label="Etykiety"><MdLabelOutline size={56} /></MapButton>
              </ControlStack>
              <MapButton type="button" aria-label="Bilety" $tone="accent"><MdConfirmationNumber size={70} /></MapButton>
              <MapButton type="button" aria-label="Zgłoś błąd" $tone="dark"><MdBugReport size={56} /></MapButton>
            </ActionStack>
          </ControlsRow>
        </Overlay>

        <Sheet>
          <Handle />
          <SheetHeader>
            <SheetTitle>Przystanki na tym obszarze</SheetTitle>
            <StopCount>38</StopCount>
          </SheetHeader>
          <Legend>
            <LegendItem $dot={color.ink}>Tramwaj</LegendItem>
            <LegendItem $dot={color.yellow}>Autobus</LegendItem>
            <LegendItem $dot={color.night}>Nocna</LegendItem>
          </Legend>
          <StopList>
            {stops.map((stop) => (
              <StopItem key={stop.name}>
                <StopButton type="button">
                  <span>
                    <StopName>{stop.name}</StopName>
                    <StopDistance>{stop.distance}</StopDistance>
                  </span>
                  <MdChevronRight size={45} color={color.muted} />
                </StopButton>
                <LineChips>
                  {stop.lines.map((line) => (
                    <LineChip key={line} $night={line.startsWith('N')}>{line}</LineChip>
                  ))}
                </LineChips>
              </StopItem>
            ))}
          </StopList>
        </Sheet>

        <NavBar>
          {tabs.map(({ label, Icon, active }) => (
            <NavLink key={label} href={`#${label.toLowerCase()}`} $active={active}>
              <NavPill $active={active}><Icon size={67} /></NavPill>
              {label}
            </NavLink>
          ))}
        </NavBar>
        <GestureArea><GestureBar /></GestureArea>
      </Screen>
    </>
  );
}
